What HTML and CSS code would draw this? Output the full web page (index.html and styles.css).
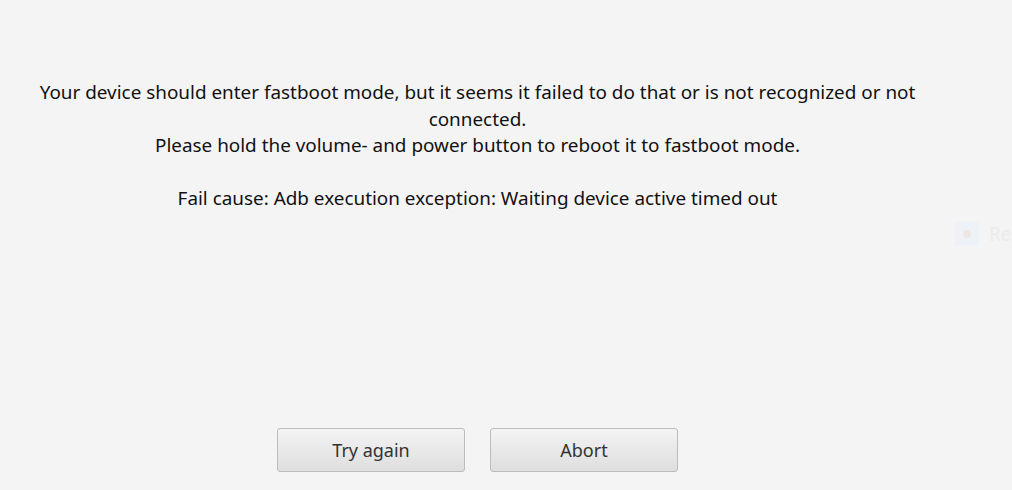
FILE: index.html
```html
<!DOCTYPE html>
<html>
<head>
<meta charset="utf-8">
<link rel="stylesheet" href="styles.css">
</head>
<body>
<div class="page">
  <main class="main">
    <div class="message">
      <p>Your device should enter fastboot mode, but it seems it failed to do that or is not recognized or not<br>connected.<br>Please hold the volume- and power button to reboot it to fastboot mode.</p>
      <p class="cause">Fail cause: Adb execution exception: Waiting device active timed out</p>
    </div>
    <div class="actions">
      <button class="btn">Try again</button>
      <button class="btn">Abort</button>
    </div>
  </main>
  <aside class="side">
    <div class="ghost">
      <span class="ghost-icon"><span class="dot"></span></span>
      <span class="ghost-text">Reboot</span>
    </div>
  </aside>
</div>
</body>
</html>
```
FILE: styles.css
```css
html, body {
  margin: 0;
  padding: 0;
  background: #f4f4f4;
}
body {
  width: 1012px;
  height: 490px;
  overflow: hidden;
  font-family: "Noto Sans", "Open Sans", sans-serif;
  color: #111;
}
.page {
  display: flex;
  height: 490px;
}
.main {
  width: 955px;
  flex: none;
  display: flex;
  flex-direction: column;
  align-items: center;
}
.message {
  padding-top: 79px;
  text-align: center;
  font-size: 18.9px;
  line-height: 26.5px;
  flex: 1;
}
.message p {
  margin: 0;
}
.message .cause {
  margin-top: 26.5px;
}
.actions {
  display: flex;
  gap: 25px;
  padding-bottom: 18px;
}
.btn {
  width: 188px;
  height: 44px;
  border: 1px solid #bcbcbc;
  border-radius: 3px;
  background: linear-gradient(#f3f3f3, #dedede);
  font-family: "Noto Sans", "Open Sans", sans-serif;
  font-size: 18px;
  color: #333;
  padding: 0;
}
.side {
  flex: 1;
  overflow: hidden;
  position: relative;
}
.ghost {
  display: flex;
  align-items: center;
  gap: 10px;
  margin-top: 221px;
  white-space: nowrap;
}
.ghost-icon {
  width: 24px;
  height: 24px;
  background: #eef1f5;
  display: flex;
  align-items: center;
  justify-content: center;
  flex: none;
}
.dot {
  width: 8px;
  height: 8px;
  border-radius: 50%;
  background: #ede6e2;
}
.ghost-text {
  font-size: 19px;
  color: #ebebeb;
}
```
